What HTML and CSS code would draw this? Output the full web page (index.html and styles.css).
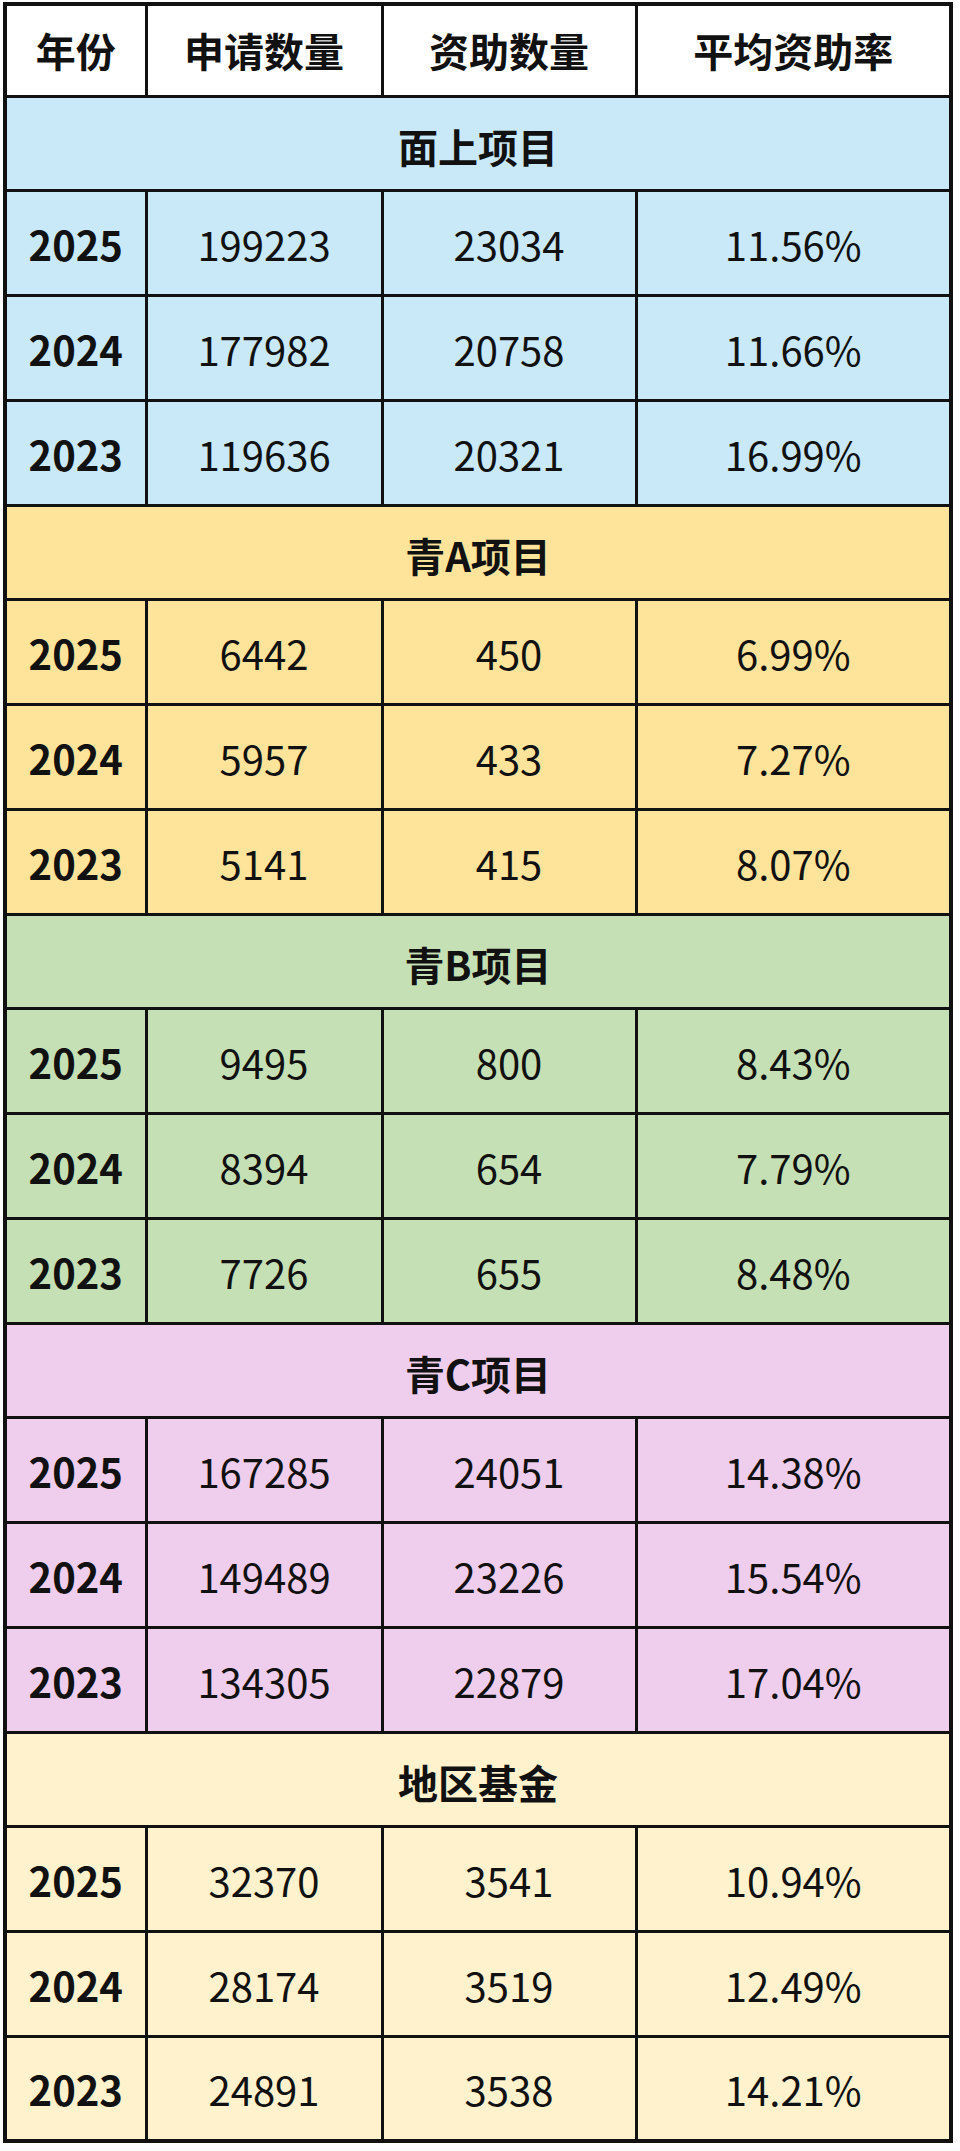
FILE: index.html
```html
<!DOCTYPE html>
<html lang="zh">
<head>
<meta charset="utf-8">
<link rel="stylesheet" href="styles.css">
</head>
<body>
<table class="grant-table">
  <colgroup>
    <col class="c-year"><col class="c-apply"><col class="c-fund"><col class="c-rate">
  </colgroup>
  <thead>
    <tr class="head-row"><th>年份</th><th>申请数量</th><th>资助数量</th><th>平均资助率</th></tr>
  </thead>
  <tbody class="grp blue">
    <tr class="sec-row"><th colspan="4">面上项目</th></tr>
    <tr class="data-row"><th>2025</th><td>199223</td><td>23034</td><td>11.56%</td></tr>
    <tr class="data-row"><th>2024</th><td>177982</td><td>20758</td><td>11.66%</td></tr>
    <tr class="data-row"><th>2023</th><td>119636</td><td>20321</td><td>16.99%</td></tr>
  </tbody>
  <tbody class="grp gold">
    <tr class="sec-row"><th colspan="4">青A项目</th></tr>
    <tr class="data-row"><th>2025</th><td>6442</td><td>450</td><td>6.99%</td></tr>
    <tr class="data-row"><th>2024</th><td>5957</td><td>433</td><td>7.27%</td></tr>
    <tr class="data-row"><th>2023</th><td>5141</td><td>415</td><td>8.07%</td></tr>
  </tbody>
  <tbody class="grp green">
    <tr class="sec-row"><th colspan="4">青B项目</th></tr>
    <tr class="data-row"><th>2025</th><td>9495</td><td>800</td><td>8.43%</td></tr>
    <tr class="data-row"><th>2024</th><td>8394</td><td>654</td><td>7.79%</td></tr>
    <tr class="data-row"><th>2023</th><td>7726</td><td>655</td><td>8.48%</td></tr>
  </tbody>
  <tbody class="grp pink">
    <tr class="sec-row"><th colspan="4">青C项目</th></tr>
    <tr class="data-row"><th>2025</th><td>167285</td><td>24051</td><td>14.38%</td></tr>
    <tr class="data-row"><th>2024</th><td>149489</td><td>23226</td><td>15.54%</td></tr>
    <tr class="data-row"><th>2023</th><td>134305</td><td>22879</td><td>17.04%</td></tr>
  </tbody>
  <tbody class="grp cream">
    <tr class="sec-row"><th colspan="4">地区基金</th></tr>
    <tr class="data-row"><th>2025</th><td>32370</td><td>3541</td><td>10.94%</td></tr>
    <tr class="data-row"><th>2024</th><td>28174</td><td>3519</td><td>12.49%</td></tr>
    <tr class="data-row"><th>2023</th><td>24891</td><td>3538</td><td>14.21%</td></tr>
  </tbody>
</table>
</body>
</html>
```
FILE: styles.css
```css
html, body {
  margin: 0;
  padding: 0;
  background: #ffffff;
}
body {
  padding: 2px 0 0 3px;
  font-family: "Noto Sans CJK SC", "Noto Sans", sans-serif;
  color: #111111;
}
.grant-table {
  border-collapse: collapse;
  table-layout: fixed;
  width: 946px;
  border: 4px solid #111111;
}
.c-year { width: 141px; }
.c-apply { width: 236px; }
.c-fund { width: 254px; }
.c-rate { width: 315px; }
.grant-table th,
.grant-table td {
  border: 3px solid #111111;
  padding: 0;
  text-align: center;
  vertical-align: middle;
  font-size: 40px;
  line-height: 1;
  font-weight: 400;
}
.grant-table th {
  font-weight: 700;
}
.head-row { height: 92px; background: #ffffff; }
.sec-row { height: 94px; }
.sec-row th { padding-top: 6px; }
.data-row { height: 105px; }
.data-row th,
.data-row td { padding-top: 2px; }
.blue { background: #c9e9f9; }
.gold { background: #fee49b; }
.green { background: #c6e0b5; }
.pink { background: #efcdec; }
.cream { background: #fff2cd; }
```
